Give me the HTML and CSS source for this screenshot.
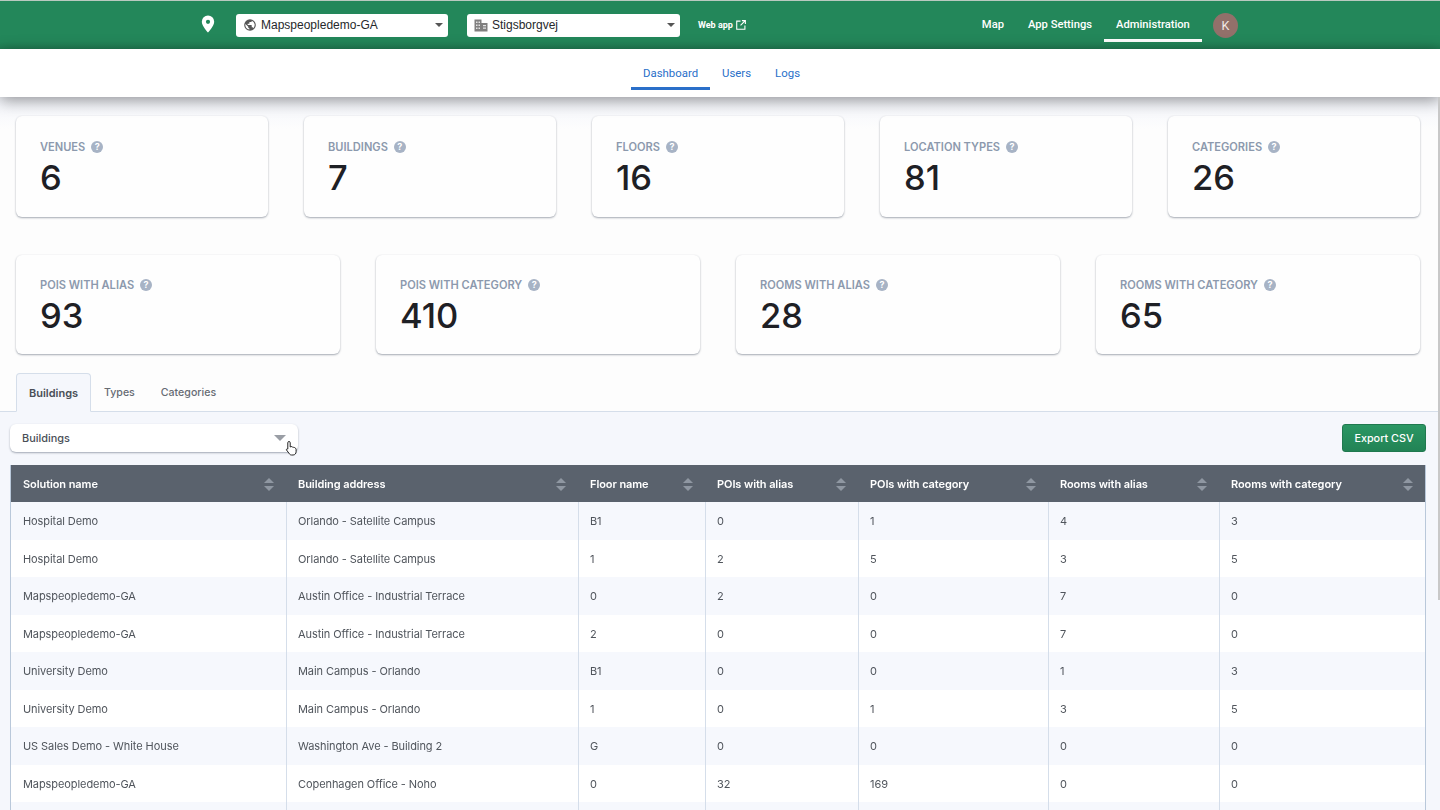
FILE: index.html
```html
<!DOCTYPE html>
<html lang="en">
<head>
<meta charset="UTF-8" />
<meta name="viewport" content="width=device-width, initial-scale=1" />
<title>Dashboard</title>
<link rel="stylesheet" href="styles.css">
</head>
<body>

<header class="topbar">
  <svg class="logo" width="14" height="18" viewBox="0 0 14 18"><path fill="#fff" fill-rule="evenodd" d="M7 .5A6.200 6.200 0 0 0 .8 6.700C.8 10.800 7 17.500 7 17.500s6.200-6.700 6.200-10.800A6.200 6.200 0 0 0 7 .5zm0 4.200a2.100 2.100 0 1 1 0 4.200 2.100 2.100 0 0 1 0-4.200z"/></svg>
  <div class="picker picker-solution">
    <svg width="14" height="14" viewBox="0 0 24 24"><path fill="#555" d="M12 2a10 10 0 1 0 0 20 10 10 0 0 0 0-20zm-1 17.900A8 8 0 0 1 4.200 10.200L9 15v1c0 1.100.9 2 2 2v1.900zm6.900-2.500A2 2 0 0 0 16 16h-1v-3a1 1 0 0 0-1-1H8v-2h2a1 1 0 0 0 1-1V7h2a2 2 0 0 0 2-2v-.4a8 8 0 0 1 2.900 12.800z"/></svg>
    <span class="picker-text">Mapspeopledemo-GA</span>
    <span class="caret"></span>
  </div>
  <div class="picker picker-venue">
    <svg width="14" height="13" viewBox="0 0 14 13"><path fill="#807f7f" d="M.5.500h7v12h-7zM7.500 4h6v8.500h-6z"/><path fill="#e4e4e4" d="M2 2.500h1.500V4H2zM4.500 2.500H6V4H4.500zM2 5.500h1.500V7H2zM4.500 5.500H6V7H4.500zM2 8.500h1.500V10H2zM4.500 8.500H6V10H4.500zM9 6h3v1.200H9zM9 8.500h3v1.200H9z"/></svg>
    <span class="picker-text">Stigsborgvej</span>
    <span class="caret"></span>
  </div>
  <a class="webapp">Web app
    <svg width="10" height="10" viewBox="0 0 11 11" fill="none" stroke="#fff" stroke-width="1.200"><path d="M5 1.200H.8v9h9V6M6.500.7h3.800v3.800M10.200.8 5 6"/></svg>
  </a>
  <nav class="mainnav">
    <a>Map</a>
    <a>App Settings</a>
    <a class="active">Administration</a>
  </nav>
  <span class="avatar">K</span>
</header>

<nav class="subnav">
  <a class="active">Dashboard</a>
  <a>Users</a>
  <a>Logs</a>
</nav>

<main class="content">
  <div class="overview">
    <section class="cards cards-five">
      <div class="card"><div class="card-label">Venues <span class="help">?</span></div><div class="card-num">6</div></div>
      <div class="card"><div class="card-label">Buildings <span class="help">?</span></div><div class="card-num">7</div></div>
      <div class="card"><div class="card-label">Floors <span class="help">?</span></div><div class="card-num">16</div></div>
      <div class="card"><div class="card-label">Location types <span class="help">?</span></div><div class="card-num">81</div></div>
      <div class="card"><div class="card-label">Categories <span class="help">?</span></div><div class="card-num">26</div></div>
    </section>
    <section class="cards cards-four">
      <div class="card"><div class="card-label">POIs with alias <span class="help">?</span></div><div class="card-num">93</div></div>
      <div class="card"><div class="card-label">POIs with category <span class="help">?</span></div><div class="card-num">410</div></div>
      <div class="card"><div class="card-label">Rooms with alias <span class="help">?</span></div><div class="card-num">28</div></div>
      <div class="card"><div class="card-label">Rooms with category <span class="help">?</span></div><div class="card-num">65</div></div>
    </section>
  </div>

  <div class="tabs">
    <a class="tab active">Buildings</a>
    <a class="tab">Types</a>
    <a class="tab">Categories</a>
  </div>

  <div class="panel">
    <div class="toolbar">
      <div class="filter">
        <span>Buildings</span>
        <span class="filter-caret"></span>
        <svg class="cursor" width="13" height="16" viewBox="0 0 13 16"><path fill="#fff" stroke="#222" stroke-width="1" d="M4 1.500c.7 0 1.200.5 1.200 1.200V7l.8-.4c.6-.2 1.100 0 1.300.5.600-.3 1.200-.1 1.400.4.600-.2 1.200 0 1.400.6.500 0 1 .4 1 1.100v2.600c0 1.600-1.100 3.200-3 3.200H6.500c-1.200 0-1.900-.7-2.500-1.700L1.500 10c-.4-.7.400-1.500 1.200-1l.1.100V2.700c0-.7.500-1.200 1.200-1.200z"/></svg>
      </div>
      <button class="export">Export CSV</button>
    </div>

    <table class="stats">
      <colgroup>
        <col class="c1"><col class="c2"><col class="c3"><col class="c4"><col class="c5"><col class="c6"><col class="c7">
      </colgroup>
      <thead>
        <tr>
          <th>Solution name<span class="sort"></span></th>
          <th>Building address<span class="sort"></span></th>
          <th>Floor name<span class="sort"></span></th>
          <th>POIs with alias<span class="sort"></span></th>
          <th>POIs with category<span class="sort"></span></th>
          <th>Rooms with alias<span class="sort"></span></th>
          <th>Rooms with category<span class="sort"></span></th>
        </tr>
      </thead>
      <tbody>
        <tr><td>Hospital Demo</td><td>Orlando - Satellite Campus</td><td>B1</td><td>0</td><td>1</td><td>4</td><td>3</td></tr>
        <tr><td>Hospital Demo</td><td>Orlando - Satellite Campus</td><td>1</td><td>2</td><td>5</td><td>3</td><td>5</td></tr>
        <tr><td>Mapspeopledemo-GA</td><td>Austin Office - Industrial Terrace</td><td>0</td><td>2</td><td>0</td><td>7</td><td>0</td></tr>
        <tr><td>Mapspeopledemo-GA</td><td>Austin Office - Industrial Terrace</td><td>2</td><td>0</td><td>0</td><td>7</td><td>0</td></tr>
        <tr><td>University Demo</td><td>Main Campus - Orlando</td><td>B1</td><td>0</td><td>0</td><td>1</td><td>3</td></tr>
        <tr><td>University Demo</td><td>Main Campus - Orlando</td><td>1</td><td>0</td><td>1</td><td>3</td><td>5</td></tr>
        <tr><td>US Sales Demo - White House</td><td>Washington Ave - Building 2</td><td>G</td><td>0</td><td>0</td><td>0</td><td>0</td></tr>
        <tr><td>Mapspeopledemo-GA</td><td>Copenhagen Office - Noho</td><td>0</td><td>32</td><td>169</td><td>0</td><td>0</td></tr>
        <tr><td>&nbsp;</td><td></td><td></td><td></td><td></td><td></td><td></td></tr>
      </tbody>
    </table>
  </div>
</main>

<div class="scrollbar"></div>

</body>
</html>
```

FILE: styles.css
```css
* {
  box-sizing: border-box;
}
html, body {
  height: 810px;
  overflow: hidden;
}
body {
  margin: 0;
  background: #f5f7fc;
  font-family: Inter, "Liberation Sans", sans-serif;
  color: #4a4f57;
}

/* top green bar */
.topbar {
  height: 49px;
  border-top: 1px solid #b9c9c0;
  background: linear-gradient(#23875a, #23875a 85%, #217d54);
  display: flex;
  align-items: center;
  color: white;
  padding-left: 201px;
}
.logo {
  margin-top: -3px;
}
.picker {
  height: 23px;
  background: white;
  border-radius: 3px;
  display: flex;
  align-items: center;
  padding: 0 5px 0 7px;
  font-family: "Liberation Sans", Arial, sans-serif;
  font-size: 12px;
  color: #26282b;
}
.picker svg {
  margin-right: 4px;
  flex: none;
}
.picker-text {
  flex: 1;
}
.picker-solution {
  width: 212px;
  margin-left: 21px;
}
.picker-venue {
  width: 213px;
  margin-left: 19px;
}
.caret {
  width: 0;
  height: 0;
  border-left: 4px solid transparent;
  border-right: 4px solid transparent;
  border-top: 4px solid #555;
}
.webapp {
  margin-left: 18px;
  font-family: Roboto, sans-serif;
  font-size: 9px;
  font-weight: 700;
  display: flex;
  align-items: center;
  gap: 3px;
}
.mainnav {
  margin-left: 224px;
  display: flex;
  height: 41px;
  align-self: flex-start;
  font-family: Roboto, sans-serif;
  font-size: 11.2px;
  font-weight: 500;
}
.mainnav a {
  display: flex;
  align-items: center;
  padding: 9px 12px 0;
  border-bottom: 3px solid transparent;
}
.mainnav a.active {
  border-bottom-color: white;
}
.avatar {
  width: 25px;
  height: 25px;
  margin-left: 11px;
  border-radius: 50%;
  background: #92706a;
  font-family: Roboto, sans-serif;
  font-size: 12.5px;
  display: flex;
  align-items: center;
  justify-content: center;
  color: #f2e8e6;
}

/* second row of links */
.subnav {
  height: 48px;
  background: white;
  display: flex;
  align-items: flex-start;
  justify-content: center;
  padding-left: 3px;
  font-family: Roboto, sans-serif;
  font-size: 11.4px;
  color: #2a6fc9;
  box-shadow: 0 3px 16px rgba(0, 0, 0, .42);
  position: relative;
}
.subnav a {
  height: 41px;
  display: flex;
  align-items: center;
  padding: 10px 12px 0;
  border-bottom: 3px solid transparent;
}
.subnav a.active {
  border-bottom-color: #2a6fc9;
}

.content {
  display: flex;
  flex-direction: column;
}
.overview {
  padding-bottom: 19px;
  background: linear-gradient(#f3f5fb, #fdfdfd 32px);
}
.cards {
  display: grid;
  gap: 36px;
  padding: 0 20px 0 16px;
}
.cards-five {
  grid-template-columns: repeat(5, 1fr);
  padding-top: 19px;
}
.cards-four {
  grid-template-columns: repeat(4, 1fr);
  margin-top: 38px;
}
.card {
  height: 101px;
  background: #fefefe;
  border-radius: 6px;
  padding: 22px 24px;
  box-shadow: 0 1px 2px rgba(60, 70, 90, .45), 0 0 2px rgba(60, 70, 90, .06);
}
.cards-four .card {
  height: 99px;
  padding-top: 21px;
}
.card-label {
  display: flex;
  align-items: center;
  gap: 6px;
  height: 17px;
  font-size: 11.1px;
  font-weight: 600;
  text-transform: uppercase;
  color: #8c99ad;
}
.help {
  width: 12px;
  height: 12px;
  border-radius: 50%;
  background: #a7b3c5;
  color: white;
  font-size: 9px;
  font-weight: 700;
  line-height: 12px;
  text-align: center;
}
.card-num {
  font-size: 34.5px;
  font-weight: 500;
  line-height: 46px;
  color: #1e2025;
}

/* tabs and table */
.tabs {
  height: 39px;
  background: #fdfdfd;
  padding-left: 16px;
  display: flex;
  border-bottom: 1px solid #d5deea;
  font-size: 10.6px;
  font-weight: 500;
  color: #666b73;
}
.tab {
  padding: 0 13px;
  height: 39px;
  display: flex;
  align-items: center;
}
.tab.active {
  width: 75px;
  justify-content: center;
  background: #f5f7fc;
  border: 1px solid #d5deea;
  border-bottom: 1px solid #f5f7fc;
  border-radius: 4px 4px 0 0;
  font-size: 11px;
  font-weight: 600;
  color: #4a4f57;
  padding: 0;
}
.panel {
  padding: 12px 14px 0 10px;
}
.toolbar {
  display: flex;
  justify-content: space-between;
  align-items: center;
  height: 28px;
}
.filter {
  width: 288px;
  height: 28px;
  background: white;
  border-radius: 6px;
  box-shadow: 0 1px 2px rgba(60, 70, 90, .45);
  font-size: 10.9px;
  font-weight: 500;
  display: flex;
  align-items: center;
  padding-left: 12px;
  position: relative;
}
.filter-caret {
  position: absolute;
  right: 12px;
  top: 11px;
  border-left: 6px solid transparent;
  border-right: 6px solid transparent;
  border-top: 6px solid #9a9ea5;
}
.cursor {
  position: absolute;
  right: 0;
  top: 16px;
}
.export {
  width: 84px;
  height: 28px;
  border: 1px solid #20794f;
  border-radius: 3px;
  background: linear-gradient(#2b9764, #228355);
  color: white;
  font-family: Inter, sans-serif;
  font-size: 10.8px;
  font-weight: 500;
}
.stats {
  width: 1416px;
  margin-top: 13px;
  table-layout: fixed;
  border-collapse: separate;
  border-spacing: 0;
  font-size: 11px;
  letter-spacing: -.08px;
  background: white;
  border-left: 1px solid #b9c8da;
  border-right: 1px solid #b9c8da;
  will-change: transform;
}
.c1 { width: 275px; }
.c2 { width: 292px; }
.c3 { width: 127px; }
.c4 { width: 153px; }
.c5 { width: 190px; }
.c6 { width: 171px; }
.c7 { width: 206px; }
.stats th {
  height: 37px;
  background: #5a626d;
  color: white;
  font-weight: 600;
  text-align: left;
  padding: 1px 12px 0;
  position: relative;
}
.sort {
  position: absolute;
  right: 12px;
  top: 13px;
  width: 10px;
  height: 13px;
}
.sort::before,
.sort::after {
  content: "";
  position: absolute;
  left: 0;
  border-left: 5px solid transparent;
  border-right: 5px solid transparent;
}
.sort::before {
  top: 0;
  border-bottom: 5.5px solid #8f97a2;
}
.sort::after {
  bottom: 0;
  border-top: 5.5px solid #8f97a2;
}
.stats td {
  height: 37.5px;
  padding: 1px 12px 0 11px;
  border-left: 1px solid #d5deea;
  color: #50555c;
}
.stats td:first-child {
  border-left: 0;
  padding-left: 12px;
}
.stats tbody tr:nth-child(odd) {
  background: #f6f8fd;
}

.scrollbar {
  position: absolute;
  top: 97px;
  right: 0;
  width: 2px;
  height: 503px;
  background: #c8c8c8;
}
```
